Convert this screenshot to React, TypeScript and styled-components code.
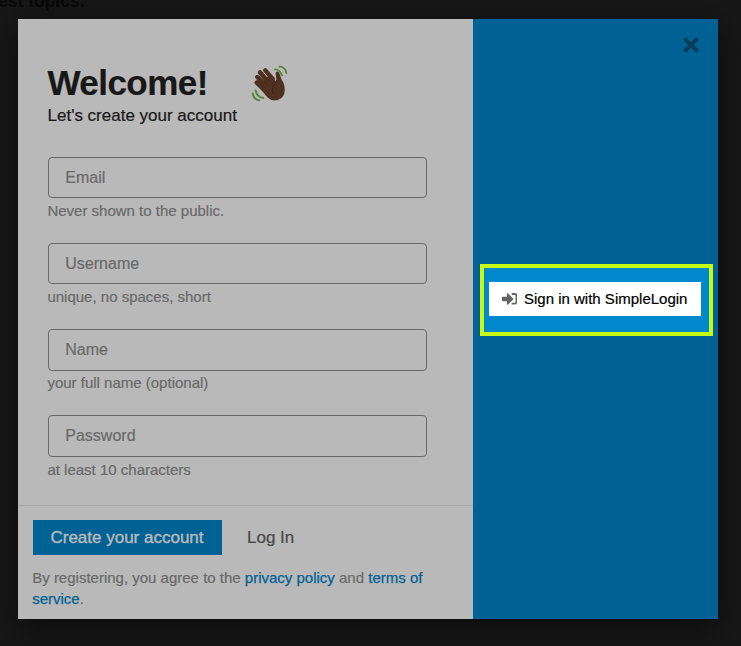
import React from "react";
import styled, { createGlobalStyle } from "styled-components";
import { FaSignInAlt, FaTimes } from "react-icons/fa";

const GlobalStyle = createGlobalStyle`
  * { box-sizing: border-box; }
  html, body { margin: 0; padding: 0; }
  body {
    background: #181818;
    font-family: "Liberation Sans", Arial, Helvetica, sans-serif;
    overflow: hidden;
  }
`;

const Page = styled.div`
  position: relative;
  width: 741px;
  height: 646px;
  padding: 19px 0 0 18px;
  overflow: hidden;
  -webkit-text-stroke: 0.2px currentColor;
`;

const Backdrop = styled.div`
  position: absolute;
  left: -2px;
  top: -9px;
  font-size: 17.5px;
  line-height: 20px;
  font-weight: 700;
  color: #090909;
  white-space: nowrap;
`;

const Modal = styled.div`
  position: relative;
  display: flex;
  width: 700px;
  height: 600px;
  box-shadow: 0 8px 36px rgba(0, 0, 0, 0.6);
`;

const FormSide = styled.div`
  display: flex;
  flex-direction: column;
  width: 455px;
  background: #b9b9b9;
`;

const Body = styled.div`
  height: 486px;
  padding: 44px 30px 0;
`;

const Header = styled.header`
  display: flex;
  gap: 14px;
  height: 94px;
`;

const Titles = styled.div`
  width: 190px;
  margin-left: -0.5px;
  white-space: nowrap;
`;

const Title = styled.h1`
  margin: 0;
  font-size: 35px;
  line-height: 40px;
  letter-spacing: -0.55px;
  color: #181818;
`;

const Subtitle = styled.p`
  margin: 3px 0 0;
  font-size: 17px;
  line-height: 20px;
  color: #181818;
`;

const Fields = styled.div`
  display: grid;
  grid-auto-rows: 86.15px;
`;

const Input = styled.input`
  display: block;
  width: 379px;
  height: 41.3px;
  padding: 0 16.3px;
  border: 1px solid #696969;
  border-radius: 4px;
  background: transparent;
  font: 16px/20px "Liberation Sans", Arial, sans-serif;
  -webkit-text-stroke: 0.2px #696969;
  outline: none;
  &::placeholder { color: #696969; opacity: 1; }
`;

const Hint = styled.div`
  margin: 3.9px 0 0 -0.6px;
  font-size: 15px;
  line-height: 18px;
  color: #696969;
`;

const Footer = styled.footer`
  flex: 1;
  padding: 14px 15px 0;
  border-top: 1px solid #a8a8a8;
`;

const Actions = styled.div`
  display: flex;
  align-items: center;
  gap: 25px;
`;

const Button = styled.button<{ $primary?: boolean }>`
  height: 35px;
  width: ${(p) => (p.$primary ? "189px" : "auto")};
  padding: 0 1px 0 0;
  border: 0;
  background: ${(p) => (p.$primary ? "#006294" : "transparent")};
  color: ${(p) => (p.$primary ? "#b9b9b9" : "#484848")};
  font: 17px/20px "Liberation Sans", Arial, sans-serif;
  -webkit-text-stroke: ${(p) => (p.$primary ? "0.4px" : "0.2px")} currentColor;
  white-space: nowrap;
`;

const Terms = styled.p`
  margin: 12px 0 0 -0.8px;
  font-size: 15px;
  line-height: 21px;
  color: #696969;
  white-space: nowrap;
`;

const Link = styled.a`
  color: #006294;
  text-decoration: none;
  -webkit-text-stroke: 0.25px #006294;
`;

const LoginSide = styled.aside`
  position: relative;
  flex: 1;
  padding: 245px 5px 0 7px;
  background: #006294;
`;

const Close = styled.button`
  position: absolute;
  top: 15px;
  right: 16px;
  display: flex;
  padding: 0;
  border: 0;
  background: none;
  color: #0c3c58;
`;

const Highlight = styled.div`
  display: flex;
  width: 233px;
  height: 72px;
  padding: 14px 8px 0 5px;
  border: 4px solid #c5fb12;
  background: #0088cc;
`;

const SocialButton = styled.button`
  display: flex;
  align-items: center;
  width: 212px;
  height: 34px;
  padding: 0 0 0 12.5px;
  gap: 7px;
  border: 0;
  background: #fff;
  color: #000;
  font: 15px/20px "Liberation Sans", Arial, sans-serif;
  -webkit-text-stroke: 0.2px #000;
  white-space: nowrap;
  svg { color: #646464; }
`;

const WaveIcon = styled.svg`
  flex: none;
  margin: 2px 0 0 -0.5px;
`;

const fields = [
  { placeholder: "Email", hint: "Never shown to the public." },
  { placeholder: "Username", hint: "unique, no spaces, short" },
  { placeholder: "Name", hint: "your full name (optional)" },
  { placeholder: "Password", hint: "at least 10 characters" },
];

function WavingHand() {
  return (
    <WaveIcon width="37" height="37" viewBox="33 30 111 111" fill="none" strokeLinecap="round">
      <path d="M76 46 98 72M60 52 85 83M52 66 80 96M50 83 77 109" stroke="#50301f" strokeWidth="13" />
      <path
        d="M75 67 96 64 106 78Q110 77 109 70L107 58C106 47 116 47 119 57L124 72C134 86 136 101 133 115C129 131 114 138 99 136C85 134 76 119 65 105Z"
        fill="#50301f"
      />
      <path d="M68 52 88 77M58 64 80 89M52 78 72 98" stroke="#3e251b" strokeWidth="1.6" />
      <path d="M109 84C97 92 93 103 101 116" stroke="#36211a" strokeWidth="3" />
      <path
        d="M105 43C115 43 122 50 126 61M118 35C129 34 138 43 139 54M47 106C49 118 56 127 70 129M38 115C40 128 48 135 58 136"
        stroke="#4f8735"
        strokeWidth="5.6"
      />
    </WaveIcon>
  );
}

export default function App() {
  return (
    <>
      <GlobalStyle />
      <Page>
        <Backdrop>est topics.</Backdrop>
        <Modal>
          <FormSide>
            <Body>
              <Header>
                <Titles>
                  <Title>Welcome!</Title>
                  <Subtitle>Let's create your account</Subtitle>
                </Titles>
                <WavingHand />
              </Header>
              <Fields>
                {fields.map((f) => (
                  <div key={f.placeholder}>
                    <Input placeholder={f.placeholder} />
                    <Hint>{f.hint}</Hint>
                  </div>
                ))}
              </Fields>
            </Body>
            <Footer>
              <Actions>
                <Button $primary>Create your account</Button>
                <Button>Log In</Button>
              </Actions>
              <Terms>
                By registering, you agree to the <Link>privacy policy</Link> and <Link>terms of<br />service</Link>.
              </Terms>
            </Footer>
          </FormSide>
          <LoginSide>
            <Close aria-label="Close"><FaTimes size={22} /></Close>
            <Highlight>
              <SocialButton>
                <FaSignInAlt size={15.5} />
                <span>Sign in with SimpleLogin</span>
              </SocialButton>
            </Highlight>
          </LoginSide>
        </Modal>
      </Page>
    </>
  );
}
